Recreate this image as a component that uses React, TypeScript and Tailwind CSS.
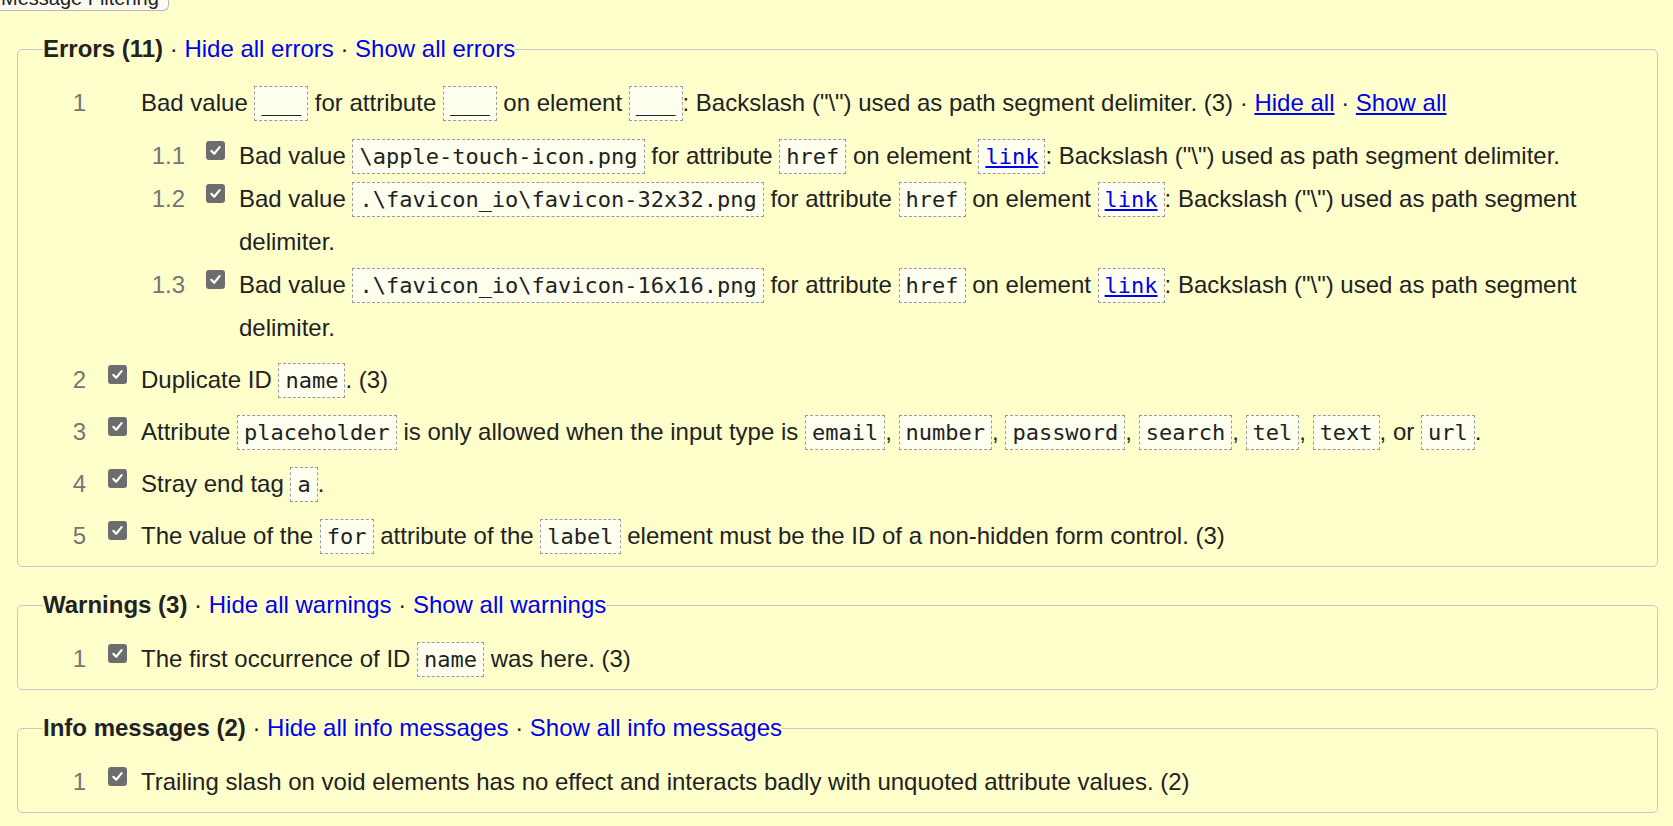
import React from "react";

const Code = ({ children, link }: { children: React.ReactNode; link?: boolean }) => (
  <code className="font-['DejaVu_Sans_Mono',monospace] text-[22px] leading-[20px] border border-dashed border-[#9a9a9a] bg-[#fffff0] px-[6px] py-[4px]">
    {link ? <a className="text-[#0000ee] underline cursor-pointer">{children}</a> : children}
  </code>
);

const Check = () => (
  <span className="mt-[7px] flex h-[19px] w-[19px] items-center justify-center rounded-[3px] bg-[#6d6d6d]">
    <svg viewBox="0 0 16 16" className="h-[15px] w-[15px]">
      <path d="M3.6 8.4 L6.6 11.4 L12.4 4.4" stroke="white" strokeWidth="2.3" fill="none" strokeLinecap="round" strokeLinejoin="round" />
    </svg>
  </span>
);

const Row = ({
  num,
  checked = true,
  nested = false,
  children,
}: {
  num: string;
  checked?: boolean;
  nested?: boolean;
  children: React.ReactNode;
}) => (
  <li className={`flex leading-[43px] ${nested ? "" : "mt-[9px] first:mt-0"}`}>
    <span className={`${nested ? "w-[44px] mr-[21px]" : "w-[68px] mr-[22px]"} shrink-0 text-right text-[#757575]`}>{num}</span>
    <span className="w-[19px] shrink-0">{checked ? <Check /> : null}</span>
    <div className="ml-[14px] min-w-0 flex-1">{children}</div>
  </li>
);

const Lnk = ({ children }: { children: React.ReactNode }) => (
  <a className="text-[#0000ee] font-normal cursor-pointer">{children}</a>
);

const Legend = ({ label, what }: { label: string; what: string }) => (
  <legend className="ml-[25px] p-0 leading-[26px]">
    <b>{label}</b> · <Lnk>Hide all {what}</Lnk> · <Lnk>Show all {what}</Lnk>
  </legend>
);

const fs = "mx-0 ml-[17px] mr-[15px] mt-[25px] rounded-[5px] border border-[#c8c8c8] pt-[19px] pb-[9px]";

export default function App() {
  return (
    <div className="flex min-h-screen flex-col bg-[#ffffcc] pb-[20px] font-['Liberation_Sans',Arial,sans-serif] text-[24px] text-[#222]">
      <div className="-mt-[13px] h-[24px] w-[169px] self-start rounded-br-[6px] border-r border-b border-[#b8b8b8] bg-[#fbfbf3] pl-[1px] text-[20px] leading-[23px] text-[#222]">
        Message Filtering
      </div>

      <fieldset className={fs}>
        <Legend label="Errors (11)" what="errors" />
        <ol>
          <Row num="1" checked={false}>
            <div>
              Bad value <Code>___</Code> for attribute <Code>___</Code> on element <Code>___</Code>: Backslash ("\") used as path segment delimiter. (3) ·{" "}
              <a className="text-[#0000ee] underline cursor-pointer">Hide all</a> ·{" "}
              <a className="text-[#0000ee] underline cursor-pointer">Show all</a>
            </div>
            <ol className="mt-[10px]">
              <Row num="1.1" nested>
                Bad value <Code>\apple-touch-icon.png</Code> for attribute <Code>href</Code> on element <Code link>link</Code>: Backslash ("\") used as path segment delimiter.
              </Row>
              <Row num="1.2" nested>
                Bad value <Code>.\favicon_io\favicon-32x32.png</Code> for attribute <Code>href</Code> on element <Code link>link</Code>: Backslash ("\") used as path segment delimiter.
              </Row>
              <Row num="1.3" nested>
                Bad value <Code>.\favicon_io\favicon-16x16.png</Code> for attribute <Code>href</Code> on element <Code link>link</Code>: Backslash ("\") used as path segment delimiter.
              </Row>
            </ol>
          </Row>
          <Row num="2">
            Duplicate ID <Code>name</Code>. (3)
          </Row>
          <Row num="3">
            Attribute <Code>placeholder</Code> is only allowed when the input type is <Code>email</Code>, <Code>number</Code>, <Code>password</Code>, <Code>search</Code>, <Code>tel</Code>, <Code>text</Code>, or <Code>url</Code>.
          </Row>
          <Row num="4">
            Stray end tag <Code>a</Code>.
          </Row>
          <Row num="5">
            The value of the <Code>for</Code> attribute of the <Code>label</Code> element must be the ID of a non-hidden form control. (3)
          </Row>
        </ol>
      </fieldset>

      <fieldset className={fs}>
        <Legend label="Warnings (3)" what="warnings" />
        <ol>
          <Row num="1">
            The first occurrence of ID <Code>name</Code> was here. (3)
          </Row>
        </ol>
      </fieldset>

      <fieldset className={fs}>
        <Legend label="Info messages (2)" what="info messages" />
        <ol>
          <Row num="1">
            Trailing slash on void elements has no effect and interacts badly with unquoted attribute values. (2)
          </Row>
        </ol>
      </fieldset>
    </div>
  );
}
